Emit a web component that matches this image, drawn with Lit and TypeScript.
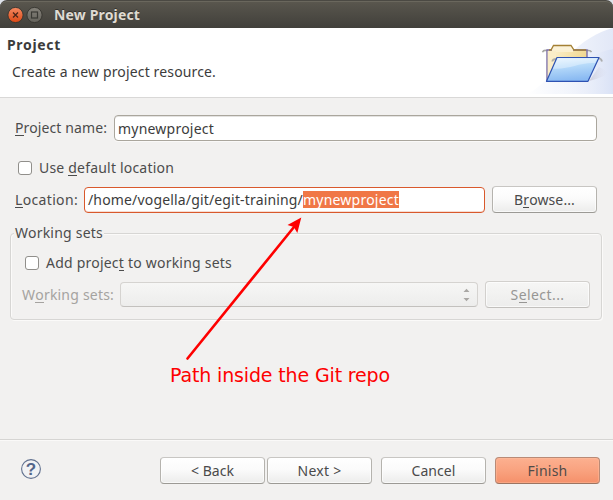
import { LitElement, html, css, svg } from "lit";
import { customElement, property } from "lit/decorators.js";

/** Single line of text whose tracking is adjusted to fill a given width. */
@customElement("fit-text")
class FitText extends LitElement {
  @property({ type: Number }) width = 0;
  static styles = css`
    :host { display: block; white-space: pre; flex: none; }
    .run { display: inline-block; }
  `;
  render() {
    return html`<span class="run"><slot></slot></span>`;
  }
  firstUpdated() {
    const run = this.renderRoot.querySelector(".run") as HTMLElement;
    const n = (this.textContent || "").length;
    if (this.width && n) {
      const natural = run.getBoundingClientRect().width;
      run.style.letterSpacing = (this.width - natural) / n + "px";
      this.style.width = this.width + "px";
    }
  }
}

@customElement("push-button")
class PushButton extends LitElement {
  @property({ reflect: true }) kind = "normal";
  static styles = css`
    :host {
      box-sizing: border-box; width: 105px; height: 27px; flex: none;
      display: flex; justify-content: center; line-height: 26px;
      border: 1px solid #b5b3ae; border-top-color: #c8c6c3; border-bottom-color: #9c9a95;
      border-radius: 4px; color: #4a4a4a;
      background: linear-gradient(#ffffff 0%, #fbfbfb 45%, #ececeb 100%);
      box-shadow: inset 0 0 0 1px rgba(255,255,255,.65);
    }
    :host([kind="disabled"]) {
      color: #979694; border-color: #d2d0cd; border-bottom-color: #c2c0bd;
      background: linear-gradient(#f6f6f5, #ededec);
    }
    :host([kind="primary"]) {
      border-color: #b98a76; border-bottom-color: #9c7461; color: #504b49;
      background: linear-gradient(#fcb090 0%, #f9a27f 50%, #f5906a 100%);
      box-shadow: inset 0 0 0 1px rgba(255,190,160,.45);
    }
  `;
  render() { return html`<slot></slot>`; }
}

@customElement("app-root")
class AppRoot extends LitElement {
  static styles = css`
    :host {
      display: flex; flex-direction: column; position: relative;
      width: 613px; height: 500px; overflow: hidden; box-sizing: border-box;
      background: #f2f1f0; color: #4c4c4c;
      font: 14px/20px "Noto Sans", "Open Sans", sans-serif;
    }
    .u { border-bottom: 1px solid currentColor; display: inline-block; line-height: 15px; }
    .corners { background: #dfe3ea; height: 28px; flex: none; }
    .titlebar {
      height: 28px; box-sizing: border-box; border-radius: 7px 7px 0 0;
      background: linear-gradient(#5b584f 0, #57544c 3px, #403f3a 28px);
      border-top: 1px solid #4b4943; box-shadow: inset 0 1px 0 #6a675d;
      display: flex; align-items: center; padding-left: 7px;
      color: #dfdbd2; font-weight: 700;
    }
    .titlebar svg { flex: none; margin-right: 3px; }
    .titlebar fit-text { margin-left: 8px; text-shadow: 0 -1px 0 #33322e; }
    .banner {
      height: 70px; flex: none; box-sizing: border-box; background: #fff;
      border-bottom: 1px solid #d9d8d7; display: flex; justify-content: space-between;
    }
    .heading { padding: 7px 0 0 7px; color: #3c3c3c; }
    .heading .name { font-weight: 700; }
    .heading .info { margin: 7px 0 0 5px; }
    .page { flex: 1; display: flex; flex-direction: column; padding: 17px 0 0 10px; }
    .row { display: flex; flex: none; padding-left: 5px; }
    .field {
      box-sizing: border-box; height: 26px; border: 1px solid #aaa69d; border-radius: 4px;
      background: #fff; color: #3c3c3c; display: flex; padding-left: 3px; line-height: 24px;
      box-shadow: 0 1px 0 #faf9f8, inset 0 1px 0 #e4e3e1;
    }
    .name-row fit-text, .loc-row > fit-text { line-height: 25px; }
    .name-row .field { width: 483px; margin-left: 7px; }
    .check {
      box-sizing: border-box; width: 14px; height: 14px; margin-top: 3px;
      border: 1px solid #918f8b; border-radius: 3px; background: #fff; flex: none;
    }
    .default-row { margin-top: 17px; padding-left: 8px; gap: 7px; }
    .loc-row { margin-top: 8px; }
    .loc-row .field { width: 401px; margin: 1px 7px 0 6px; border-color: #d9592c; padding-left: 3px;
      box-shadow: inset 0 -1px 0 #f6ddd3; }
    .loc-row > fit-text { margin-top: 1px; }
    .sel { background: #f07746; color: #fff; height: 17px; line-height: 17px; margin-top: 3px; }
    .group {
      margin-top: 20px; width: 592px; height: 87px; box-sizing: border-box; flex: none;
      border: 1px solid #d7d6d4; border-radius: 4px; box-shadow: inset 1px 1px 0 #fbfaf9, 1px 1px 0 #fbfaf9;
    }
    .legend { margin: -11px 0 0 3px; padding: 0 1px; width: 88px; background: #f2f1f0; }
    .add-row { padding-left: 14px; gap: 7px; margin-top: 10px; }
    .set-row { padding-left: 11px; margin-top: 8px; color: #a5a3a0; }
    .set-row > fit-text { line-height: 27px; }
    .combo {
      box-sizing: border-box; width: 358px; height: 25px; margin: 1px 7px 0 6px;
      border: 1px solid #d5d3d0; border-bottom-color: #c3c1be; border-radius: 4px;
      background: linear-gradient(#f6f6f5, #ededec);
      display: flex; justify-content: flex-end; align-items: center; padding-right: 7px;
    }
    .note { position: absolute; left: 170px; top: 363px; color: #fe0000;
      font: 19px/24px "DejaVu Sans", sans-serif; }
    .arrow { position: absolute; left: 180px; top: 210px; }
    .footer {
      height: 61px; flex: none; box-sizing: border-box; border-top: 1px solid #d6d5d3;
      box-shadow: inset 0 1px 0 #faf9f8; display: flex; padding: 17px 13px 0 20px;
    }
    .footer svg { margin-top: 1px; }
    .help-mark { font: 700 17px "Liberation Sans", sans-serif; fill: #52658a; }
    .actions { margin-left: auto; display: flex; gap: 9px; }
    .pair { display: flex; gap: 2px; }
  `;

  titleButtons() {
    return svg`
      <svg width="36" height="18" viewBox="0 0 36 18">
        <defs>
          <linearGradient id="close" x2="0" y2="1"><stop stop-color="#f58a62"/><stop offset="1" stop-color="#dd4814"/></linearGradient>
          <linearGradient id="max" x2="0" y2="1"><stop stop-color="#85827a"/><stop offset="1" stop-color="#64625b"/></linearGradient>
        </defs>
        <circle cx="8.5" cy="9" r="7.6" fill="url(#close)" stroke="#35342f" stroke-width=".9"/>
        <path d="M6 6.5l5 5M11 6.5l-5 5" stroke="#4b2518" stroke-width="1.3"/>
        <circle cx="27.5" cy="9" r="7.6" fill="url(#max)" stroke="#35342f" stroke-width=".9"/>
        <rect x="24.5" y="6" width="6" height="6" fill="none" stroke="#3a3934" stroke-width="1.2"/>
      </svg>`;
  }

  folder() {
    return svg`
      <svg width="100" height="66" viewBox="0 28 100 66">
        <defs>
          <linearGradient id="glow" x1="0" x2="1"><stop stop-color="#fff"/><stop offset="1" stop-color="#dde4f6"/></linearGradient>
          <linearGradient id="glow2" x1="0" x2="1"><stop stop-color="#fff" stop-opacity="0"/><stop offset="1" stop-color="#dae2f6"/></linearGradient>
          <linearGradient id="tan" x2="1" y2=".4"><stop stop-color="#fdf3d5"/><stop offset="1" stop-color="#efd58a"/></linearGradient>
          <linearGradient id="blue" x2=".2" y2="1"><stop stop-color="#e8f5ff"/><stop offset=".4" stop-color="#b9dcfa"/><stop offset="1" stop-color="#8abaf2"/></linearGradient>
          <linearGradient id="shade" x1="0" x2="1"><stop stop-color="#a9a5b6"/><stop offset="1" stop-color="#dfe2f2" stop-opacity="0"/></linearGradient>
        </defs>
        <path d="M100 28C84 32 70 41 55 56 42 70 28 88 14 94H100Z" fill="url(#glow)" opacity=".85"/>
        <path d="M100 49C82 52 62 64 40 94H100Z" fill="url(#glow2)"/>
        <path d="M76 81L86 67Q92 70 96 72Q90 78 76 81Z" fill="url(#shade)" opacity=".45"/>
        <path d="M29.5 52.3q1-2.3 3.5-1.8H75q2.500-.3 3.500 1.600" fill="none" stroke="#a5a5a3" stroke-width="1.6"/>
        <path d="M34 81V50H74V81Z" fill="url(#tan)" stroke="#7b6da6" stroke-width="1.4"/>
        <path d="M36 50H38L40.5 45.5H58L61 50H73" fill="#fbf2d8" stroke="#a48034" stroke-width="1.3"/>
        <path d="M39 50H60V52H39Z" fill="#fbf0d0"/>
        <path d="M34.8 51V77L43 59V51Z" fill="#faedc8"/>
        <path d="M39.500 61.500q-.5-2.500 4.500-2.500M85 58.500q3-.5 4 3" fill="none" stroke="#9d9d9b" stroke-width="1.8" opacity=".8"/>
        <path d="M44 57.5H86L75 81.3H33.5Z" fill="url(#blue)" stroke="#2e52b2" stroke-width="1.2" stroke-linejoin="round"/>
        <path d="M44.8 58.5H84L82 63C67 62 55 70 40 68.5Z" fill="#fff" opacity=".35"/>
      </svg>`;
  }

  render() {
    return html`
      <div class="corners"><div class="titlebar">${this.titleButtons()}<fit-text .width=${86}>New Project</fit-text></div></div>
      <div class="banner">
        <div class="heading">
          <fit-text class="name" .width=${54}>Project</fit-text>
          <fit-text class="info" .width=${204}>Create a new project resource.</fit-text>
        </div>
        ${this.folder()}
      </div>
      <div class="page">
        <div class="row name-row">
          <fit-text .width=${92}><span class="u">P</span>roject name:</fit-text>
          <div class="field"><fit-text .width=${96}>mynewproject</fit-text></div>
        </div>
        <div class="row default-row">
          <div class="check"></div>
          <fit-text .width=${135}>Use <span class="u">d</span>efault location</fit-text>
        </div>
        <div class="row loc-row">
          <fit-text .width=${63}><span class="u">L</span>ocation:</fit-text>
          <div class="field">
            <fit-text .width=${215}>/home/vogella/git/egit-training/</fit-text>
            <fit-text class="sel" .width=${96}>mynewproject</fit-text>
          </div>
          <push-button><fit-text .width=${61}>B<span class="u">r</span>owse...</fit-text></push-button>
        </div>
        <div class="group">
          <div class="legend"><fit-text .width=${88}>Working sets</fit-text></div>
          <div class="row add-row">
            <div class="check"></div>
            <fit-text .width=${186}>Add projec<span class="u">t</span> to working sets</fit-text>
          </div>
          <div class="row set-row">
            <fit-text .width=${92}>W<span class="u">o</span>rking sets:</fit-text>
            <div class="combo">
              <svg width="7" height="14" viewBox="0 0 7 14"><path d="M.5 4L3.5 .8L6.5 4ZM.5 10L3.5 13.2L6.5 10Z" fill="#a9a7a4"/></svg>
            </div>
            <push-button kind="disabled"><fit-text .width=${54}>S<span class="u">e</span>lect...</fit-text></push-button>
          </div>
        </div>
      </div>
      <div class="footer">
        <svg width="22" height="22" viewBox="0 0 22 22">
          <circle cx="11" cy="11" r="9.4" fill="#f1f2f4" stroke="#61718f" stroke-width="1.1"/>
          <text class="help-mark" x="11" y="17" text-anchor="middle">?</text>
        </svg>
        <div class="actions">
          <div class="pair">
            <push-button><fit-text .width=${43}>&lt; Back</fit-text></push-button>
            <push-button><fit-text .width=${44}>Next &gt;</fit-text></push-button>
          </div>
          <push-button><fit-text .width=${44}>Cancel</fit-text></push-button>
          <push-button kind="primary"><fit-text .width=${40}>Finish</fit-text></push-button>
        </div>
      </div>
      <svg class="arrow" width="130" height="155" viewBox="180 210 130 155">
        <path d="M187.500 358.500L294 227" stroke="#fe0000" stroke-width="2.6" stroke-linecap="round"/>
        <path d="M301.300 217.500L297.300 233L293.800 227L287.500 225Z" fill="#fe0000"/>
      </svg>
      <fit-text class="note" .width=${220}>Path inside the Git repo</fit-text>
    `;
  }
}
